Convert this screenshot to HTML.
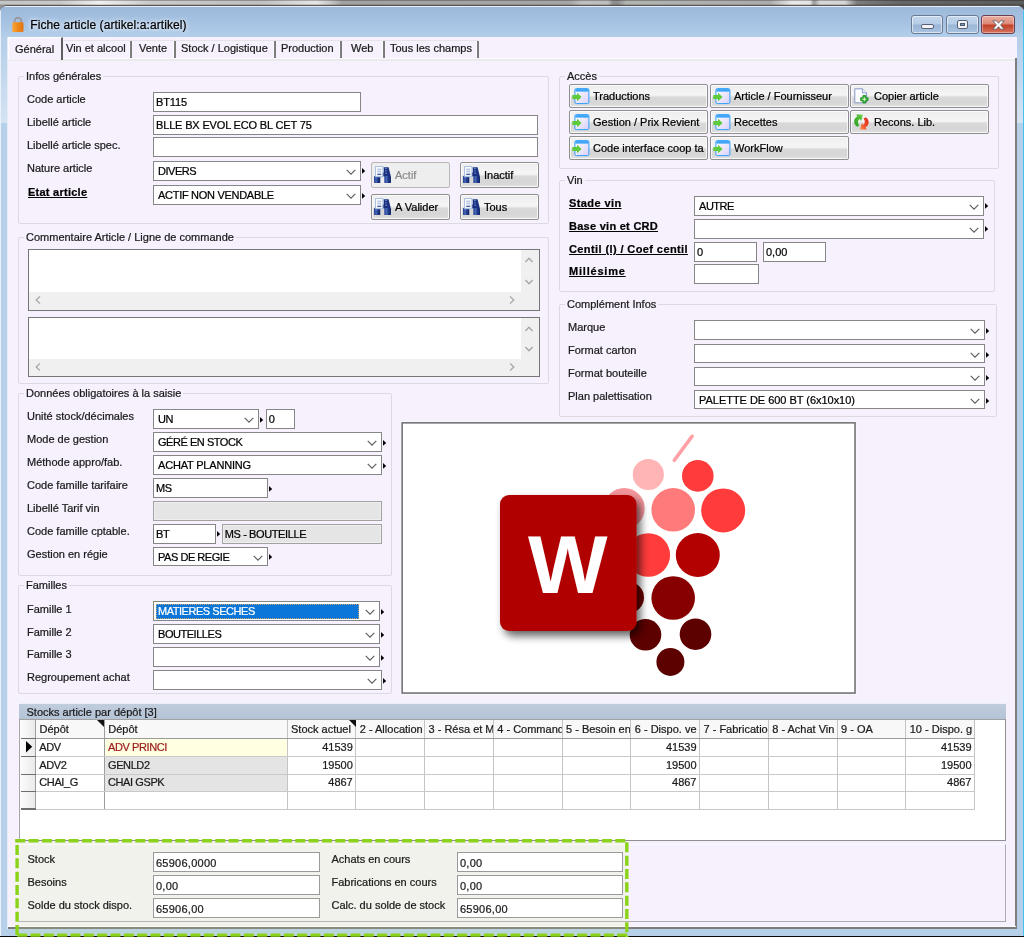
<!DOCTYPE html>
<html><head><meta charset="utf-8">
<style>
*{box-sizing:border-box;margin:0;padding:0}
html,body{width:1024px;height:937px;overflow:hidden;background:#b7d0ea}
body{font-family:"Liberation Sans",sans-serif;font-size:11px;color:#1a1a1a;position:relative;-webkit-text-stroke:.22px currentColor}
.a{position:absolute}
#desk{left:0;top:0;width:1024px;height:12px;background:linear-gradient(to bottom,rgba(0,0,0,.42) 0,rgba(0,0,0,0) 1.3px,rgba(0,0,0,0) 3.8px,rgba(0,0,0,.25) 5px),linear-gradient(to right,#c4c4c2 0,#c8c8c6 60px,#f0f0ee 100px,#cacac8 150px,#c0c0be 260px,#e6e6e4 316px,#c8c8c6 330px,#a2a2a2 342px,#a6a6a6 570px,#c0c0be 582px,#bdbdbb 608px,#8e8e8e 613px,#8e8e8e 618px,#b2b4b0 626px,#acacac 770px,#e8e8e6 792px,#e4e4e2 810px,#9a9a9a 814px,#d8d8d6 820px,#d4d4d2 845px,#7c7c7c 857px,#666 900px,#5c5c5c 1024px)}
#win{left:0;top:5px;width:1024px;height:932px;background:#b7d0ea;border-top:1px solid #565758;border-radius:7px 7px 0 0;overflow:hidden}
#title{left:0;top:0;width:1024px;height:32px;background:linear-gradient(#9db9da,#a4c1e2 45%,#b4cfea)}
#ttext{left:30.3px;top:12px;font-size:12px;letter-spacing:.09px;color:#000;white-space:nowrap;text-shadow:0 0 4px #fff,0 0 6px #e8f0fa}
#client{left:8px;top:37px;width:1009px;height:892px;background:#f6f1fc}
.gb{border:1px solid #dcd9e3;border-radius:2px}
.gbl{background:#f6f1fc;padding:0 2px;white-space:nowrap;line-height:13px;height:13px}
.lbl{white-space:nowrap;line-height:13px;height:13px}
.bl{font-weight:bold;text-decoration:underline;color:#000;letter-spacing:.4px}
.fld{letter-spacing:-.15px;background:#fff;border:1px solid #868686;height:20px;line-height:18px;padding-left:2px;white-space:nowrap;overflow:hidden;color:#000}
.cmb{padding-left:4px}
.ro{background:#e5e5e5;border-color:#a2a2a2;box-shadow:inset 0 0 0 1px #efefef}
.btn{border:1px solid #8e8f8f;border-radius:2px;background:linear-gradient(#eeeeee,#f5f5f5 46%,#d9d9d9 56%,#d6d6d6 80%,#e0e0e0);box-shadow:inset 0 0 0 1px rgba(255,255,255,.75);white-space:nowrap;line-height:20px;height:22px;color:#000}
.bf{letter-spacing:.25px;background:#fff;border:1px solid #9a9a9a;height:20px;line-height:20px;padding-left:2px;white-space:nowrap;color:#1a1a1a}
.cap{border:1px solid #6b7b94;border-radius:3px;box-shadow:inset 0 0 0 1px rgba(255,255,255,.55);background:linear-gradient(#c3d6ec,#b6cce6 48%,#9ab5d6 52%,#a9c3e0)}
#wrap{left:0;top:0;width:1024px;height:937px;filter:blur(.45px)}
</style></head><body>
<div id="wrap" class="a">
<div id="desk" class="a"></div>
<div id="win" class="a">
 <div id="title" class="a"></div>
 <div class="a" style="left:0;top:0;width:1024px;height:1px;background:rgba(255,255,255,.75)"></div>
 <div class="a" style="left:0;top:4px;width:1px;height:930px;background:rgba(255,255,255,.7)"></div>
 <div class="a" style="left:1022.7px;top:4px;width:1.3px;height:930px;background:#45c3ee"></div>
 <div id="ttext" class="a">Fiche article (artikel:a:artikel)</div>
 <svg class="a" style="left:12px;top:10px" width="12" height="17" viewBox="0 0 12 17"><defs><linearGradient id="lk" x1="0" x2="1"><stop offset="0" stop-color="#f9a63a"/><stop offset=".45" stop-color="#f08a1c"/><stop offset="1" stop-color="#e27412"/></linearGradient></defs><path d="M2.6 8V5.2a3.4 3.4 0 0 1 6.8 0V8" fill="none" stroke="#9a9aa0" stroke-width="1.9"/><rect x="0.3" y="6.3" width="11.2" height="9.8" rx="1.3" fill="url(#lk)"/></svg><div class="a cap" style="left:911px;top:9px;width:32px;height:19px"><div class="a" style="left:9px;top:8px;width:12.5px;height:5px;background:#f4f4f4;border:1px solid #55627a;border-radius:2px"></div></div><div class="a cap" style="left:946px;top:9px;width:33px;height:19px"><div class="a" style="left:9.7px;top:3.9px;width:11px;height:9px;background:#f4f4f4;border:1px solid #55627a;border-radius:2px"><div class="a" style="left:2px;top:2px;width:5px;height:3px;background:#7f9bc2;border:1px solid #4a5a72"></div></div></div><div class="a cap" style="left:981px;top:9px;width:34px;height:19px;border-color:#6b4050;background:linear-gradient(#e9b0a2,#dd8775 48%,#c23f24 52%,#d8735f);box-shadow:inset 0 0 0 1px rgba(255,255,255,.35)"><svg class="a" style="left:10px;top:4px" width="13" height="10" viewBox="0 0 13 10"><path d="M0.8 0.8h3.6L6.5 3.3 8.6 0.8h3.6L8.6 5l3.6 4.2H8.6L6.5 6.7 4.4 9.2H0.8L4.4 5z" fill="#fff" stroke="#5a5a66" stroke-width=".8" stroke-linejoin="round"/></svg></div>
</div>
<div class="a" style="left:7px;top:37px;width:1.5px;height:892px;background:rgba(255,255,255,.6)"></div>
<div class="a" style="left:1px;top:45px;width:6px;height:78px;background:linear-gradient(rgba(255,255,255,0),rgba(255,255,255,.42))"></div>
<div class="a" style="left:1017px;top:45px;width:5.7px;height:78px;background:linear-gradient(rgba(255,255,255,0),rgba(255,255,255,.42))"></div>
<div id="client" class="a"></div>
<div class="a" style="left:0;top:935.8px;width:1024px;height:2px;background:#0a0a0a"></div>
<div id="ui" class="a" style="left:0;top:0;width:1024px;height:937px">

<div class="a " style="left:8px;top:58px;width:1008px;height:1.1px;background:#fcfbfe"></div><div class="a " style="left:8px;top:59.1px;width:1008px;height:1.6px;background:#ebebeb"></div><div class="a " style="left:62.5px;top:40.2px;width:415px;height:1.2px;background:#e5e4e9"></div><div class="a " style="left:8px;top:37px;width:55px;height:23px;background:#f6f1fc;border-right:2px solid #5e5e5e;border-top:1px solid #fff;border-left:1px solid #fff"></div><div class="a lbl" style="left:15px;top:43px;">Général</div><div class="a lbl" style="left:66px;top:42px;">Vin et alcool</div><div class="a " style="left:129.4px;top:40.8px;width:2.8px;height:17.3px;background:#7c7c7c;border-left:1px solid #fbfbfd"></div><div class="a lbl" style="left:139px;top:42px;">Vente</div><div class="a " style="left:172.9px;top:40.8px;width:2.8px;height:17.3px;background:#7c7c7c;border-left:1px solid #fbfbfd"></div><div class="a lbl" style="left:181px;top:42px;">Stock / Logistique</div><div class="a " style="left:273.4px;top:40.8px;width:2.8px;height:17.3px;background:#7c7c7c;border-left:1px solid #fbfbfd"></div><div class="a lbl" style="left:281px;top:42px;">Production</div><div class="a " style="left:338.9px;top:40.8px;width:2.8px;height:17.3px;background:#7c7c7c;border-left:1px solid #fbfbfd"></div><div class="a lbl" style="left:351px;top:42px;">Web</div><div class="a " style="left:381.9px;top:40.8px;width:2.8px;height:17.3px;background:#7c7c7c;border-left:1px solid #fbfbfd"></div><div class="a lbl" style="left:390px;top:42px;">Tous les champs</div><div class="a " style="left:476.09999999999997px;top:40.8px;width:2.8px;height:17.3px;background:#7c7c7c;border-left:1px solid #fbfbfd"></div><div class="a " style="left:1015.1px;top:58.3px;width:1.6px;height:870.2px;background:#7e7e7e"></div><div class="a gb" style="left:18px;top:76px;width:531px;height:148px;"></div><div class="a gbl" style="left:24px;top:70px;">Infos générales</div><div class="a lbl" style="left:27px;top:93px;">Code article</div><div class="a lbl" style="left:27px;top:116px;">Libellé article</div><div class="a lbl" style="left:27px;top:139px;">Libellé article spec.</div><div class="a lbl" style="left:27px;top:162px;">Nature article</div><div class="a lbl bl" style="left:28px;top:186px;letter-spacing:.25px">Etat article</div><div class="a fld " style="left:153px;top:91.6px;width:207.5px;height:20px;line-height:19px;;letter-spacing:-0.1px">BT115</div><div class="a fld " style="left:153px;top:115px;width:385px;height:20px;line-height:19px;;letter-spacing:-0.16px">BLLE BX EVOL ECO BL CET 75</div><div class="a fld " style="left:153px;top:137.4px;width:385px;height:20px;line-height:19px;;letter-spacing:-0.46px"></div><div class="a fld cmb" style="left:153px;top:160.8px;width:207.5px;height:20px;line-height:19px;letter-spacing:-0.46px">DIVERS<svg class="a" style="right:4px;top:7px" width="10" height="7" viewBox="0 0 10 7"><path d="M0.7 0.9 L5 5.2 L9.3 0.9" fill="none" stroke="#5a5a5a" stroke-width="1.1"/></svg></div><svg class="a" style="left:361.5px;top:168.3px" width="4" height="6" viewBox="0 0 4 6"><path d="M0 0 L3.2 2.9 L0 5.8 Z" fill="#000"/></svg><div class="a fld cmb" style="left:153px;top:185.4px;width:207.5px;height:20px;line-height:19px;letter-spacing:-0.29px">ACTIF NON VENDABLE<svg class="a" style="right:4px;top:7px" width="10" height="7" viewBox="0 0 10 7"><path d="M0.7 0.9 L5 5.2 L9.3 0.9" fill="none" stroke="#5a5a5a" stroke-width="1.1"/></svg></div><svg class="a" style="left:361.5px;top:192.9px" width="4" height="6" viewBox="0 0 4 6"><path d="M0 0 L3.2 2.9 L0 5.8 Z" fill="#000"/></svg><div class="a btn" style="left:371px;top:162px;width:78.5px;height:26px;line-height:24px;color:#8a8a8a;background:#eeeeee;border-color:#b8b8b8;box-shadow:none;"><svg class="a" style="left:2px;top:3px" width="17" height="17" viewBox="0 0 17 17"><defs><linearGradient id="bn" x1="0" x2="1"><stop offset="0" stop-color="#243f92"/><stop offset=".35" stop-color="#4a69b6"/><stop offset=".6" stop-color="#1f3988"/><stop offset="1" stop-color="#14276a"/></linearGradient></defs><path d="M9.6 1.2h5l2.2 9H10z" fill="#1b3180"/><path d="M11.2 2.5h1.6M11.2 4.8h1.6M11.2 7.2h2" stroke="#6f8fd0" stroke-width="1"/><rect x="5.8" y="6.5" width="5" height="3.8" fill="#1a2f78"/><rect x="0" y="10" width="6.3" height="7" rx=".6" fill="url(#bn)"/><rect x="10.3" y="10" width="6.7" height="7" rx=".6" fill="url(#bn)"/><rect x="1.6" y=".6" width="7.3" height="10.2" fill="#fdfeff" stroke="#9fb8dc" stroke-width=".9"/><path d="M3.3 3.2h4M3.3 5.2h4M3.3 7.2h4" stroke="#92a6c8" stroke-width=".9"/><path d="M3.2 8.6h4.2" stroke="#3a58a8" stroke-width="1"/></svg><span class="a" style="left:23px;top:0">Actif</span></div><div class="a btn" style="left:460px;top:162px;width:78.5px;height:26px;line-height:24px;color:#000;"><svg class="a" style="left:2px;top:3px" width="17" height="17" viewBox="0 0 17 17"><defs><linearGradient id="bn" x1="0" x2="1"><stop offset="0" stop-color="#243f92"/><stop offset=".35" stop-color="#4a69b6"/><stop offset=".6" stop-color="#1f3988"/><stop offset="1" stop-color="#14276a"/></linearGradient></defs><path d="M9.6 1.2h5l2.2 9H10z" fill="#1b3180"/><path d="M11.2 2.5h1.6M11.2 4.8h1.6M11.2 7.2h2" stroke="#6f8fd0" stroke-width="1"/><rect x="5.8" y="6.5" width="5" height="3.8" fill="#1a2f78"/><rect x="0" y="10" width="6.3" height="7" rx=".6" fill="url(#bn)"/><rect x="10.3" y="10" width="6.7" height="7" rx=".6" fill="url(#bn)"/><rect x="1.6" y=".6" width="7.3" height="10.2" fill="#fdfeff" stroke="#9fb8dc" stroke-width=".9"/><path d="M3.3 3.2h4M3.3 5.2h4M3.3 7.2h4" stroke="#92a6c8" stroke-width=".9"/><path d="M3.2 8.6h4.2" stroke="#3a58a8" stroke-width="1"/></svg><span class="a" style="left:23px;top:0">Inactif</span></div><div class="a btn" style="left:371px;top:193.5px;width:78.5px;height:26px;line-height:24px;color:#000;"><svg class="a" style="left:2px;top:3px" width="17" height="17" viewBox="0 0 17 17"><defs><linearGradient id="bn" x1="0" x2="1"><stop offset="0" stop-color="#243f92"/><stop offset=".35" stop-color="#4a69b6"/><stop offset=".6" stop-color="#1f3988"/><stop offset="1" stop-color="#14276a"/></linearGradient></defs><path d="M9.6 1.2h5l2.2 9H10z" fill="#1b3180"/><path d="M11.2 2.5h1.6M11.2 4.8h1.6M11.2 7.2h2" stroke="#6f8fd0" stroke-width="1"/><rect x="5.8" y="6.5" width="5" height="3.8" fill="#1a2f78"/><rect x="0" y="10" width="6.3" height="7" rx=".6" fill="url(#bn)"/><rect x="10.3" y="10" width="6.7" height="7" rx=".6" fill="url(#bn)"/><rect x="1.6" y=".6" width="7.3" height="10.2" fill="#fdfeff" stroke="#9fb8dc" stroke-width=".9"/><path d="M3.3 3.2h4M3.3 5.2h4M3.3 7.2h4" stroke="#92a6c8" stroke-width=".9"/><path d="M3.2 8.6h4.2" stroke="#3a58a8" stroke-width="1"/></svg><span class="a" style="left:23px;top:0">A Valider</span></div><div class="a btn" style="left:460px;top:193.5px;width:78.5px;height:26px;line-height:24px;color:#000;"><svg class="a" style="left:2px;top:3px" width="17" height="17" viewBox="0 0 17 17"><defs><linearGradient id="bn" x1="0" x2="1"><stop offset="0" stop-color="#243f92"/><stop offset=".35" stop-color="#4a69b6"/><stop offset=".6" stop-color="#1f3988"/><stop offset="1" stop-color="#14276a"/></linearGradient></defs><path d="M9.6 1.2h5l2.2 9H10z" fill="#1b3180"/><path d="M11.2 2.5h1.6M11.2 4.8h1.6M11.2 7.2h2" stroke="#6f8fd0" stroke-width="1"/><rect x="5.8" y="6.5" width="5" height="3.8" fill="#1a2f78"/><rect x="0" y="10" width="6.3" height="7" rx=".6" fill="url(#bn)"/><rect x="10.3" y="10" width="6.7" height="7" rx=".6" fill="url(#bn)"/><rect x="1.6" y=".6" width="7.3" height="10.2" fill="#fdfeff" stroke="#9fb8dc" stroke-width=".9"/><path d="M3.3 3.2h4M3.3 5.2h4M3.3 7.2h4" stroke="#92a6c8" stroke-width=".9"/><path d="M3.2 8.6h4.2" stroke="#3a58a8" stroke-width="1"/></svg><span class="a" style="left:23px;top:0">Tous</span></div><div class="a gb" style="left:18px;top:236.5px;width:531px;height:147px;"></div><div class="a gbl" style="left:24px;top:230.5px;">Commentaire Article / Ligne de commande</div><div class="a " style="left:28px;top:249px;width:512px;height:61.5px;background:#fff;border:1px solid #767676"></div><div class="a " style="left:29px;top:292.0px;width:510px;height:17.5px;background:#f0f0f0"></div><div class="a " style="left:521px;top:250px;width:18px;height:59.5px;background:#f0f0f0"></div><svg class="a" style="left:31.5px;top:294.0px" width="12" height="12" viewBox="-6 -6 12 12"><path d="M2 -3.6L-1.8 0L2 3.6" fill="none" stroke="#a6a6a6" stroke-width="1.3"/></svg><svg class="a" style="left:505.7px;top:294.0px" width="12" height="12" viewBox="-6 -6 12 12"><path d="M-2 -3.6L1.8 0L-2 3.6" fill="none" stroke="#a6a6a6" stroke-width="1.3"/></svg><svg class="a" style="left:522.7px;top:254.39999999999998px" width="12" height="12" viewBox="-6 -6 12 12"><path d="M-3.6 2L0 -1.8L3.6 2" fill="none" stroke="#a6a6a6" stroke-width="1.3"/></svg><svg class="a" style="left:522.7px;top:276.3px" width="12" height="12" viewBox="-6 -6 12 12"><path d="M-3.6 -2L0 1.8L3.6 -2" fill="none" stroke="#a6a6a6" stroke-width="1.3"/></svg><div class="a " style="left:28px;top:317.3px;width:512px;height:60px;background:#fff;border:1px solid #767676"></div><div class="a " style="left:29px;top:358.8px;width:510px;height:17.5px;background:#f0f0f0"></div><div class="a " style="left:521px;top:318.3px;width:18px;height:58px;background:#f0f0f0"></div><svg class="a" style="left:31.5px;top:360.8px" width="12" height="12" viewBox="-6 -6 12 12"><path d="M2 -3.6L-1.8 0L2 3.6" fill="none" stroke="#a6a6a6" stroke-width="1.3"/></svg><svg class="a" style="left:505.7px;top:360.8px" width="12" height="12" viewBox="-6 -6 12 12"><path d="M-2 -3.6L1.8 0L-2 3.6" fill="none" stroke="#a6a6a6" stroke-width="1.3"/></svg><svg class="a" style="left:522.7px;top:322.7px" width="12" height="12" viewBox="-6 -6 12 12"><path d="M-3.6 2L0 -1.8L3.6 2" fill="none" stroke="#a6a6a6" stroke-width="1.3"/></svg><svg class="a" style="left:522.7px;top:343.1px" width="12" height="12" viewBox="-6 -6 12 12"><path d="M-3.6 -2L0 1.8L3.6 -2" fill="none" stroke="#a6a6a6" stroke-width="1.3"/></svg><div class="a gb" style="left:18px;top:393px;width:373.5px;height:183px;"></div><div class="a gbl" style="left:24px;top:387px;">Données obligatoires à la saisie</div><div class="a lbl" style="left:27px;top:410px;">Unité stock/décimales</div><div class="a lbl" style="left:27px;top:433px;">Mode de gestion</div><div class="a lbl" style="left:27px;top:456px;">Méthode appro/fab.</div><div class="a lbl" style="left:27px;top:479px;">Code famille tarifaire</div><div class="a lbl" style="left:27px;top:502px;">Libellé Tarif vin</div><div class="a lbl" style="left:27px;top:525px;">Code famille cptable.</div><div class="a lbl" style="left:27px;top:548px;">Gestion en régie</div><div class="a fld cmb" style="left:153px;top:409px;width:106px;height:20px;line-height:19px;letter-spacing:-0.46px">UN<svg class="a" style="right:4px;top:7px" width="10" height="7" viewBox="0 0 10 7"><path d="M0.7 0.9 L5 5.2 L9.3 0.9" fill="none" stroke="#5a5a5a" stroke-width="1.1"/></svg></div><svg class="a" style="left:260px;top:416.5px" width="4" height="6" viewBox="0 0 4 6"><path d="M0 0 L3.2 2.9 L0 5.8 Z" fill="#000"/></svg><div class="a fld " style="left:265.7px;top:409px;width:29px;height:20px;line-height:19px;;letter-spacing:0px">0</div><div class="a fld cmb" style="left:153px;top:432.2px;width:229px;height:20px;line-height:19px;letter-spacing:-0.46px">GÉRÉ EN STOCK<svg class="a" style="right:4px;top:7px" width="10" height="7" viewBox="0 0 10 7"><path d="M0.7 0.9 L5 5.2 L9.3 0.9" fill="none" stroke="#5a5a5a" stroke-width="1.1"/></svg></div><svg class="a" style="left:383px;top:439.7px" width="4" height="6" viewBox="0 0 4 6"><path d="M0 0 L3.2 2.9 L0 5.8 Z" fill="#000"/></svg><div class="a fld cmb" style="left:153px;top:455.2px;width:229px;height:20px;line-height:19px;letter-spacing:-0.19px">ACHAT PLANNING<svg class="a" style="right:4px;top:7px" width="10" height="7" viewBox="0 0 10 7"><path d="M0.7 0.9 L5 5.2 L9.3 0.9" fill="none" stroke="#5a5a5a" stroke-width="1.1"/></svg></div><svg class="a" style="left:383px;top:462.7px" width="4" height="6" viewBox="0 0 4 6"><path d="M0 0 L3.2 2.9 L0 5.8 Z" fill="#000"/></svg><div class="a fld " style="left:153px;top:478px;width:114.5px;height:20px;line-height:19px;;letter-spacing:-0.46px">MS</div><svg class="a" style="left:268.5px;top:485.5px" width="4" height="6" viewBox="0 0 4 6"><path d="M0 0 L3.2 2.9 L0 5.8 Z" fill="#000"/></svg><div class="a fld ro" style="left:153px;top:501px;width:229px;height:20px;line-height:19px;;letter-spacing:-0.46px"></div><div class="a fld " style="left:153px;top:523.7px;width:62.5px;height:20px;line-height:19px;;letter-spacing:-0.46px">BT</div><svg class="a" style="left:216.5px;top:531.2px" width="4" height="6" viewBox="0 0 4 6"><path d="M0 0 L3.2 2.9 L0 5.8 Z" fill="#000"/></svg><div class="a fld ro" style="left:221.8px;top:523.7px;width:160.2px;height:20px;line-height:19px;;letter-spacing:-0.39px">MS - BOUTEILLE</div><div class="a fld cmb" style="left:153px;top:546.6px;width:114.5px;height:19.8px;line-height:18.8px;letter-spacing:-0.46px">PAS DE REGIE<svg class="a" style="right:4px;top:7px" width="10" height="7" viewBox="0 0 10 7"><path d="M0.7 0.9 L5 5.2 L9.3 0.9" fill="none" stroke="#5a5a5a" stroke-width="1.1"/></svg></div><svg class="a" style="left:268.5px;top:554.1px" width="4" height="6" viewBox="0 0 4 6"><path d="M0 0 L3.2 2.9 L0 5.8 Z" fill="#000"/></svg><div class="a gb" style="left:18px;top:584.6px;width:373.5px;height:109px;"></div><div class="a gbl" style="left:24px;top:578.6px;">Familles</div><div class="a lbl" style="left:27px;top:603px;">Famille 1</div><div class="a lbl" style="left:27px;top:625.5px;">Famille 2</div><div class="a lbl" style="left:27px;top:647.8px;">Famille 3</div><div class="a lbl" style="left:27px;top:670.6px;">Regroupement achat</div><div class="a fld cmb" style="left:153px;top:601.4px;width:227px;height:20px;line-height:19px;letter-spacing:-0.46px"><span class="a" style="left:2px;top:1.5px;right:20px;bottom:1.5px;background:#0a76d8;color:#fff;line-height:15px;padding-left:2px;outline:1px dotted #c9a070;outline-offset:-1px">MATIERES SECHES</span><svg class="a" style="right:4px;top:7px" width="10" height="7" viewBox="0 0 10 7"><path d="M0.7 0.9 L5 5.2 L9.3 0.9" fill="none" stroke="#5a5a5a" stroke-width="1.1"/></svg></div><svg class="a" style="left:381px;top:608.9px" width="4" height="6" viewBox="0 0 4 6"><path d="M0 0 L3.2 2.9 L0 5.8 Z" fill="#000"/></svg><div class="a fld cmb" style="left:153px;top:624.3px;width:227px;height:20px;line-height:19px;letter-spacing:-0.46px">BOUTEILLES<svg class="a" style="right:4px;top:7px" width="10" height="7" viewBox="0 0 10 7"><path d="M0.7 0.9 L5 5.2 L9.3 0.9" fill="none" stroke="#5a5a5a" stroke-width="1.1"/></svg></div><svg class="a" style="left:381px;top:631.8px" width="4" height="6" viewBox="0 0 4 6"><path d="M0 0 L3.2 2.9 L0 5.8 Z" fill="#000"/></svg><div class="a fld cmb" style="left:153px;top:647.2px;width:227px;height:20px;line-height:19px;letter-spacing:-0.46px"><svg class="a" style="right:4px;top:7px" width="10" height="7" viewBox="0 0 10 7"><path d="M0.7 0.9 L5 5.2 L9.3 0.9" fill="none" stroke="#5a5a5a" stroke-width="1.1"/></svg></div><svg class="a" style="left:381px;top:654.7px" width="4" height="6" viewBox="0 0 4 6"><path d="M0 0 L3.2 2.9 L0 5.8 Z" fill="#000"/></svg><div class="a fld cmb" style="left:153px;top:670.1px;width:229px;height:20px;line-height:19px;letter-spacing:-0.46px"><svg class="a" style="right:4px;top:7px" width="10" height="7" viewBox="0 0 10 7"><path d="M0.7 0.9 L5 5.2 L9.3 0.9" fill="none" stroke="#5a5a5a" stroke-width="1.1"/></svg></div><svg class="a" style="left:383px;top:677.6px" width="4" height="6" viewBox="0 0 4 6"><path d="M0 0 L3.2 2.9 L0 5.8 Z" fill="#000"/></svg>
<div class="a gb" style="left:559px;top:76px;width:440px;height:93px;"></div><div class="a gbl" style="left:565px;top:70px;">Accès</div><div class="a btn" style="left:569px;top:84px;width:139px;height:24px;line-height:22px;color:#000;"><svg class="a" style="left:2px;top:3px" width="18" height="17" viewBox="0 0 18 17"><defs><linearGradient id="wg" x1="0" y1="0" x2="1" y2="1"><stop offset="0" stop-color="#ffffff"/><stop offset="1" stop-color="#d9d0f8"/></linearGradient></defs><rect x="2.9" y="0.6" width="14" height="15" rx="1.5" fill="url(#wg)" stroke="#2f9ffa"/><rect x="3.4" y="1.1" width="13" height="2.5" fill="#38a3f8"/><path d="M0.3 7.1h4.7V4.8L9.6 9 5 13.2V10.9H0.3z" fill="#5fca3c"/></svg><span class="a" style="left:23px;top:0">Traductions</span></div><div class="a btn" style="left:710px;top:84px;width:139px;height:24px;line-height:22px;color:#000;"><svg class="a" style="left:2px;top:3px" width="18" height="17" viewBox="0 0 18 17"><defs><linearGradient id="wg" x1="0" y1="0" x2="1" y2="1"><stop offset="0" stop-color="#ffffff"/><stop offset="1" stop-color="#d9d0f8"/></linearGradient></defs><rect x="2.9" y="0.6" width="14" height="15" rx="1.5" fill="url(#wg)" stroke="#2f9ffa"/><rect x="3.4" y="1.1" width="13" height="2.5" fill="#38a3f8"/><path d="M0.3 7.1h4.7V4.8L9.6 9 5 13.2V10.9H0.3z" fill="#5fca3c"/></svg><span class="a" style="left:23px;top:0">Article / Fournisseur</span></div><div class="a btn" style="left:850px;top:84px;width:139px;height:24px;line-height:22px;color:#000;"><svg class="a" style="left:3px;top:3px" width="17" height="17" viewBox="0 0 17 17"><path d="M0.8 0.8h7.6l4.2 4.2v9.8h-11.8z" fill="#fdfdff" stroke="#8698c6" stroke-width="1"/><path d="M8.4 0.8v4.2h4.2" fill="#e8ecf8" stroke="#8698c6" stroke-width=".9"/><path d="M8.9 7.6h2.9v2.2h2.2v2.9h-2.2v2.2h-2.9v-2.2h-2.2v-2.9h2.2z" fill="#35b135" stroke="#1e8c1e" stroke-width=".9" stroke-linejoin="round"/><path d="M10.35 9.3v3.9M8.4 11.25h3.9" stroke="#d8f5d0" stroke-width="1"/></svg><span class="a" style="left:23px;top:0">Copier article</span></div><div class="a btn" style="left:569px;top:110px;width:139px;height:24px;line-height:22px;color:#000;"><svg class="a" style="left:2px;top:3px" width="18" height="17" viewBox="0 0 18 17"><defs><linearGradient id="wg" x1="0" y1="0" x2="1" y2="1"><stop offset="0" stop-color="#ffffff"/><stop offset="1" stop-color="#d9d0f8"/></linearGradient></defs><rect x="2.9" y="0.6" width="14" height="15" rx="1.5" fill="url(#wg)" stroke="#2f9ffa"/><rect x="3.4" y="1.1" width="13" height="2.5" fill="#38a3f8"/><path d="M0.3 7.1h4.7V4.8L9.6 9 5 13.2V10.9H0.3z" fill="#5fca3c"/></svg><span class="a" style="left:23px;top:0">Gestion / Prix Revient</span></div><div class="a btn" style="left:710px;top:110px;width:139px;height:24px;line-height:22px;color:#000;"><svg class="a" style="left:2px;top:3px" width="18" height="17" viewBox="0 0 18 17"><defs><linearGradient id="wg" x1="0" y1="0" x2="1" y2="1"><stop offset="0" stop-color="#ffffff"/><stop offset="1" stop-color="#d9d0f8"/></linearGradient></defs><rect x="2.9" y="0.6" width="14" height="15" rx="1.5" fill="url(#wg)" stroke="#2f9ffa"/><rect x="3.4" y="1.1" width="13" height="2.5" fill="#38a3f8"/><path d="M0.3 7.1h4.7V4.8L9.6 9 5 13.2V10.9H0.3z" fill="#5fca3c"/></svg><span class="a" style="left:23px;top:0">Recettes</span></div><div class="a btn" style="left:850px;top:110px;width:139px;height:24px;line-height:22px;color:#000;"><svg class="a" style="left:2px;top:3px" width="18" height="17" viewBox="-1.5 0 18 17"><defs><linearGradient id="rg" x1="1" y1="0" x2="0" y2="1"><stop offset="0" stop-color="#e0281a"/><stop offset=".6" stop-color="#f0502a"/><stop offset="1" stop-color="#ff9a4a"/></linearGradient><linearGradient id="gg" x1="0" y1="1" x2="1" y2="0"><stop offset="0" stop-color="#2f9a22"/><stop offset=".7" stop-color="#4cc034"/><stop offset="1" stop-color="#9be07a"/></linearGradient></defs><path d="M2.6 12.8C-1.6 9.6-1.2 4.2 3 2.6L1.6 0.6L8.6 0.5L6.6 7L5.2 5C3 6.4 3 9.4 5 11.6Z" fill="url(#gg)"/><path d="M11.4 3.2C15.4 6.2 15 11.4 11 13.2L12.2 15.4L5.4 15.5L7.4 9L8.8 10.9C10.8 9.6 10.8 6.6 9 4.6Z" fill="url(#rg)"/></svg><span class="a" style="left:23px;top:0">Recons. Lib.</span></div><div class="a btn" style="left:569px;top:136px;width:139px;height:24px;line-height:22px;color:#000;"><svg class="a" style="left:2px;top:3px" width="18" height="17" viewBox="0 0 18 17"><defs><linearGradient id="wg" x1="0" y1="0" x2="1" y2="1"><stop offset="0" stop-color="#ffffff"/><stop offset="1" stop-color="#d9d0f8"/></linearGradient></defs><rect x="2.9" y="0.6" width="14" height="15" rx="1.5" fill="url(#wg)" stroke="#2f9ffa"/><rect x="3.4" y="1.1" width="13" height="2.5" fill="#38a3f8"/><path d="M0.3 7.1h4.7V4.8L9.6 9 5 13.2V10.9H0.3z" fill="#5fca3c"/></svg><span class="a" style="left:23px;top:0">Code interface coop ta</span></div><div class="a btn" style="left:710px;top:136px;width:139px;height:24px;line-height:22px;color:#000;"><svg class="a" style="left:2px;top:3px" width="18" height="17" viewBox="0 0 18 17"><defs><linearGradient id="wg" x1="0" y1="0" x2="1" y2="1"><stop offset="0" stop-color="#ffffff"/><stop offset="1" stop-color="#d9d0f8"/></linearGradient></defs><rect x="2.9" y="0.6" width="14" height="15" rx="1.5" fill="url(#wg)" stroke="#2f9ffa"/><rect x="3.4" y="1.1" width="13" height="2.5" fill="#38a3f8"/><path d="M0.3 7.1h4.7V4.8L9.6 9 5 13.2V10.9H0.3z" fill="#5fca3c"/></svg><span class="a" style="left:23px;top:0">WorkFlow</span></div><div class="a gb" style="left:559px;top:180px;width:436px;height:112px;"></div><div class="a gbl" style="left:565px;top:174px;">Vin</div><div class="a lbl bl" style="left:569px;top:197px;">Stade vin</div><div class="a lbl bl" style="left:569px;top:220px;letter-spacing:.27px">Base vin et CRD</div><div class="a lbl bl" style="left:569px;top:243px;">Centil (l) / Coef centil</div><div class="a lbl bl" style="left:569px;top:265px;letter-spacing:.8px">Millésime</div><div class="a fld cmb" style="left:694px;top:195.8px;width:289.5px;height:20px;line-height:19px;letter-spacing:-0.46px">AUTRE<svg class="a" style="right:4px;top:7px" width="10" height="7" viewBox="0 0 10 7"><path d="M0.7 0.9 L5 5.2 L9.3 0.9" fill="none" stroke="#5a5a5a" stroke-width="1.1"/></svg></div><svg class="a" style="left:984.5px;top:203.3px" width="4" height="6" viewBox="0 0 4 6"><path d="M0 0 L3.2 2.9 L0 5.8 Z" fill="#000"/></svg><div class="a fld cmb" style="left:694px;top:218.8px;width:289.5px;height:20px;line-height:19px;letter-spacing:-0.46px"><svg class="a" style="right:4px;top:7px" width="10" height="7" viewBox="0 0 10 7"><path d="M0.7 0.9 L5 5.2 L9.3 0.9" fill="none" stroke="#5a5a5a" stroke-width="1.1"/></svg></div><svg class="a" style="left:984.5px;top:226.3px" width="4" height="6" viewBox="0 0 4 6"><path d="M0 0 L3.2 2.9 L0 5.8 Z" fill="#000"/></svg><div class="a fld " style="left:694px;top:241.6px;width:63px;height:20px;line-height:19px;;letter-spacing:0px">0</div><div class="a fld " style="left:763px;top:241.6px;width:62.5px;height:20px;line-height:19px;;letter-spacing:0px">0,00</div><div class="a fld " style="left:694px;top:264.4px;width:65px;height:20px;line-height:19px;;letter-spacing:-0.46px"></div><div class="a gb" style="left:559px;top:304.3px;width:437.5px;height:112.3px;"></div><div class="a gbl" style="left:565px;top:298.3px;">Complément Infos</div><div class="a lbl" style="left:568px;top:321px;">Marque</div><div class="a lbl" style="left:568px;top:344px;">Format carton</div><div class="a lbl" style="left:568px;top:367px;">Format bouteille</div><div class="a lbl" style="left:568px;top:390px;">Plan palettisation</div><div class="a fld cmb" style="left:694px;top:320px;width:291.3px;height:20px;line-height:19px;letter-spacing:-0.46px"><svg class="a" style="right:4px;top:7px" width="10" height="7" viewBox="0 0 10 7"><path d="M0.7 0.9 L5 5.2 L9.3 0.9" fill="none" stroke="#5a5a5a" stroke-width="1.1"/></svg></div><svg class="a" style="left:986.3px;top:327.5px" width="4" height="6" viewBox="0 0 4 6"><path d="M0 0 L3.2 2.9 L0 5.8 Z" fill="#000"/></svg><div class="a fld cmb" style="left:694px;top:344px;width:291.3px;height:19.4px;line-height:18.4px;letter-spacing:-0.46px"><svg class="a" style="right:4px;top:7px" width="10" height="7" viewBox="0 0 10 7"><path d="M0.7 0.9 L5 5.2 L9.3 0.9" fill="none" stroke="#5a5a5a" stroke-width="1.1"/></svg></div><svg class="a" style="left:986.3px;top:351.5px" width="4" height="6" viewBox="0 0 4 6"><path d="M0 0 L3.2 2.9 L0 5.8 Z" fill="#000"/></svg><div class="a fld cmb" style="left:694px;top:367px;width:291.3px;height:19.4px;line-height:18.4px;letter-spacing:-0.46px"><svg class="a" style="right:4px;top:7px" width="10" height="7" viewBox="0 0 10 7"><path d="M0.7 0.9 L5 5.2 L9.3 0.9" fill="none" stroke="#5a5a5a" stroke-width="1.1"/></svg></div><svg class="a" style="left:986.3px;top:374.5px" width="4" height="6" viewBox="0 0 4 6"><path d="M0 0 L3.2 2.9 L0 5.8 Z" fill="#000"/></svg><div class="a fld cmb" style="left:694px;top:390px;width:291.3px;height:19.4px;line-height:18.4px;letter-spacing:-0.03px">PALETTE DE 600 BT (6x10x10)<svg class="a" style="right:4px;top:7px" width="10" height="7" viewBox="0 0 10 7"><path d="M0.7 0.9 L5 5.2 L9.3 0.9" fill="none" stroke="#5a5a5a" stroke-width="1.1"/></svg></div><svg class="a" style="left:986.3px;top:397.5px" width="4" height="6" viewBox="0 0 4 6"><path d="M0 0 L3.2 2.9 L0 5.8 Z" fill="#000"/></svg>
<svg class="a" style="left:398px;top:419px" width="462" height="279" viewBox="398 419 462 279"><rect x="401.1" y="421.8" width="455" height="272.3" fill="none" stroke="#fff" stroke-opacity=".55" stroke-width="1"/><rect x="402.15" y="422.85" width="452.9" height="270.2" fill="#fff" stroke="#6c6c70" stroke-width="1.5"/></svg><svg class="a" style="left:403px;top:423px" width="452" height="269" viewBox="403 423 452 269">
<defs>
<filter id="sh" x="-20%" y="-20%" width="150%" height="150%"><feGaussianBlur in="SourceAlpha" stdDeviation="4"/><feOffset dx="4" dy="5"/><feComponentTransfer><feFuncA type="linear" slope=".62"/></feComponentTransfer><feMerge><feMergeNode/><feMergeNode in="SourceGraphic"/></feMerge></filter>
</defs>
<line x1="674.3" y1="460.3" x2="692.1" y2="436.3" stroke="#ff9fa6" stroke-width="3.6" stroke-linecap="round"/>
<circle cx="648.3" cy="474.5" r="15.6" fill="#ffb5b5"/>
<circle cx="697.8" cy="475.9" r="15.8" fill="#ff3b3b"/>
<circle cx="624.2" cy="508.4" r="20.5" fill="#f3969b"/>
<circle cx="673.2" cy="509.8" r="21.8" fill="#ff7b7b"/>
<circle cx="723.2" cy="510.4" r="22" fill="#ff3b3b"/>
<circle cx="648.3" cy="555" r="21.8" fill="#ff3b3b"/>
<circle cx="697.8" cy="555" r="22" fill="#b30000"/>
<circle cx="628.5" cy="597.5" r="15.5" fill="#6e0000"/>
<circle cx="673.2" cy="598" r="21.8" fill="#870000"/>
<circle cx="645.5" cy="634.8" r="15.8" fill="#5c0000"/>
<circle cx="695.5" cy="634.2" r="15.8" fill="#5c0000"/>
<circle cx="670.4" cy="661.9" r="14" fill="#5c0000"/>
<rect x="500" y="495" width="136.5" height="136" rx="9" fill="#b10000" filter="url(#sh)"/>
<text x="567.8" y="593.3" text-anchor="middle" font-family="Liberation Sans" font-weight="bold" font-size="82" textLength="79.5" lengthAdjust="spacingAndGlyphs" fill="#fff">W</text>
</svg>
<div class="a " style="left:18.9px;top:719.3px;width:987.2px;height:122.2px;background:#fff;border:1px solid #8f8f8f;border-left-color:#a6a6a6;border-top-color:#a2a2a2"></div><div class="a " style="left:18.9px;top:703.3px;width:987.2px;height:16.2px;background:linear-gradient(#c0cddd,#b4c3d6)"></div><div class="a " style="left:18px;top:702.5px;width:988px;height:1px;background:rgba(255,255,255,.7)"></div><div class="a lbl" style="left:26.5px;top:706px;">Stocks article par dépôt [3]</div><div class="a " style="left:20.5px;top:720px;width:954px;height:18.5px;background:#f8f8f8"></div><div class="a" style="left:36.5px;top:721.2px;width:67.25px;height:17px;overflow:hidden;white-space:nowrap;line-height:17px;padding-left:3px">Dépôt</div><div class="a" style="left:105.25px;top:721.2px;width:181.25px;height:17px;overflow:hidden;white-space:nowrap;line-height:17px;padding-left:3px">Dépôt</div><div class="a" style="left:288px;top:721.2px;width:67.25px;height:17px;overflow:hidden;white-space:nowrap;line-height:17px;padding-left:3px">Stock actuel</div><div class="a" style="left:356.75px;top:721.2px;width:67.25px;height:17px;overflow:hidden;white-space:nowrap;line-height:17px;padding-left:3px">2 - Allocation</div><div class="a" style="left:425.5px;top:721.2px;width:67.25px;height:17px;overflow:hidden;white-space:nowrap;line-height:17px;padding-left:3px">3 - Résa et Mise</div><div class="a" style="left:494.25px;top:721.2px;width:67.25px;height:17px;overflow:hidden;white-space:nowrap;line-height:17px;padding-left:3px">4 - Commande</div><div class="a" style="left:563px;top:721.2px;width:67.25px;height:17px;overflow:hidden;white-space:nowrap;line-height:17px;padding-left:3px">5 - Besoin en</div><div class="a" style="left:631.75px;top:721.2px;width:67.25px;height:17px;overflow:hidden;white-space:nowrap;line-height:17px;padding-left:3px">6 - Dispo. ve</div><div class="a" style="left:700.5px;top:721.2px;width:67.25px;height:17px;overflow:hidden;white-space:nowrap;line-height:17px;padding-left:3px">7 - Fabrication</div><div class="a" style="left:769.25px;top:721.2px;width:67.25px;height:17px;overflow:hidden;white-space:nowrap;line-height:17px;padding-left:3px">8 - Achat Vin</div><div class="a" style="left:838px;top:721.2px;width:67.25px;height:17px;overflow:hidden;white-space:nowrap;line-height:17px;padding-left:3px">9 - OA</div><div class="a" style="left:906.75px;top:721.2px;width:67.25px;height:17px;overflow:hidden;white-space:nowrap;line-height:17px;padding-left:3px">10 - Dispo. g</div><div class="a " style="left:20px;top:720px;width:15.5px;height:89px;background:linear-gradient(to right,#fcfcfc,#e9e9e9)"></div><div class="a " style="left:104.75px;top:739px;width:182px;height:17.5px;background:#ffffe1"></div><div class="a " style="left:104.75px;top:757px;width:182px;height:17px;background:#e4e4e4"></div><div class="a " style="left:104.75px;top:774.5px;width:182px;height:17px;background:#e4e4e4"></div><div class="a " style="left:35.0px;top:720px;width:1px;height:89px;background:#9c9c9c"></div><div class="a " style="left:103.75px;top:720px;width:1px;height:89px;background:#9c9c9c"></div><div class="a " style="left:286.5px;top:720px;width:1px;height:89px;background:#c4c4c4"></div><div class="a " style="left:355.25px;top:720px;width:1px;height:89px;background:#c4c4c4"></div><div class="a " style="left:424.0px;top:720px;width:1px;height:89px;background:#c4c4c4"></div><div class="a " style="left:492.75px;top:720px;width:1px;height:89px;background:#c4c4c4"></div><div class="a " style="left:561.5px;top:720px;width:1px;height:89px;background:#c4c4c4"></div><div class="a " style="left:630.25px;top:720px;width:1px;height:89px;background:#c4c4c4"></div><div class="a " style="left:699.0px;top:720px;width:1px;height:89px;background:#c4c4c4"></div><div class="a " style="left:767.75px;top:720px;width:1px;height:89px;background:#c4c4c4"></div><div class="a " style="left:836.5px;top:720px;width:1px;height:89px;background:#c4c4c4"></div><div class="a " style="left:905.25px;top:720px;width:1px;height:89px;background:#c4c4c4"></div><div class="a " style="left:974.0px;top:720px;width:1px;height:89px;background:#c4c4c4"></div><div class="a " style="left:20.5px;top:738px;width:954.5px;height:1px;background:#9a9a9a"></div><div class="a " style="left:35.5px;top:756.0px;width:939.5px;height:1px;background:#c9c9c9"></div><div class="a " style="left:35.5px;top:773.5px;width:939.5px;height:1px;background:#c9c9c9"></div><div class="a " style="left:35.5px;top:791.0px;width:939.5px;height:1px;background:#c9c9c9"></div><div class="a " style="left:35.5px;top:808.5px;width:939.5px;height:1px;background:#c9c9c9"></div><div class="a " style="left:20.5px;top:738.0px;width:15px;height:1px;background:#6e6e6e"></div><div class="a " style="left:20.5px;top:756.0px;width:15px;height:1px;background:#6e6e6e"></div><div class="a " style="left:20.5px;top:773.5px;width:15px;height:1px;background:#6e6e6e"></div><div class="a " style="left:20.5px;top:791.0px;width:15px;height:1px;background:#6e6e6e"></div><div class="a " style="left:20.5px;top:808.5px;width:15px;height:1px;background:#6e6e6e"></div><div class="a " style="left:20.5px;top:808px;width:15.5px;height:1.5px;background:#6e6e6e"></div><svg class="a" style="left:97px;top:720px" width="7" height="7" viewBox="0 0 7 7"><path d="M0 0H7V7Z" fill="#111"/></svg><svg class="a" style="left:348.5px;top:720px" width="7" height="7" viewBox="0 0 7 7"><path d="M0 0H7V7Z" fill="#111"/></svg><svg class="a" style="left:25.8px;top:741.3px" width="7" height="12" viewBox="0 0 7 12"><path d="M0 0L6.2 5.7L0 11.4Z" fill="#000"/></svg><div class="a lbl" style="left:39.3px;top:740.7px;letter-spacing:-.4px">ADV</div><div class="a lbl" style="left:108px;top:740.7px;color:#9b1c1c;letter-spacing:-.4px">ADV PRINCI</div><div class="a lbl" style="left:292.75px;top:740.7px;width:60px;text-align:right">41539</div><div class="a lbl" style="left:636.5px;top:740.7px;width:60px;text-align:right">41539</div><div class="a lbl" style="left:911.5px;top:740.7px;width:60px;text-align:right">41539</div><div class="a lbl" style="left:39.3px;top:758.7px;letter-spacing:-.4px">ADV2</div><div class="a lbl" style="left:108px;top:758.7px;color:#1a1a1a;letter-spacing:-.4px">GENLD2</div><div class="a lbl" style="left:292.75px;top:758.7px;width:60px;text-align:right">19500</div><div class="a lbl" style="left:636.5px;top:758.7px;width:60px;text-align:right">19500</div><div class="a lbl" style="left:911.5px;top:758.7px;width:60px;text-align:right">19500</div><div class="a lbl" style="left:39.3px;top:776.2px;letter-spacing:-.4px">CHAI_G</div><div class="a lbl" style="left:108px;top:776.2px;color:#1a1a1a;letter-spacing:-.4px">CHAI GSPK</div><div class="a lbl" style="left:292.75px;top:776.2px;width:60px;text-align:right">4867</div><div class="a lbl" style="left:636.5px;top:776.2px;width:60px;text-align:right">4867</div><div class="a lbl" style="left:911.5px;top:776.2px;width:60px;text-align:right">4867</div>
<div class="a " style="left:18px;top:843.5px;width:987.8px;height:78.2px;background:#f6f1fc;border:1px solid #aeadb6;border-top-color:#fbfaff;border-left-color:#fbfaff"></div><div class="a " style="left:8px;top:926px;width:1008px;height:1px;background:#fbfaff"></div><div class="a " style="left:8px;top:927px;width:1008.7px;height:1.6px;background:#7c7c7c"></div><div class="a " style="left:17px;top:841px;width:610px;height:95px;background:rgba(212,255,135,.12)"></div><div class="a lbl" style="left:27.5px;top:853px;">Stock</div><div class="a lbl" style="left:27.5px;top:876px;">Besoins</div><div class="a lbl" style="left:27.5px;top:899px;">Solde du stock dispo.</div><div class="a lbl" style="left:331.5px;top:853px;">Achats en cours</div><div class="a lbl" style="left:331.5px;top:876px;">Fabrications en cours</div><div class="a lbl" style="left:331.5px;top:899px;">Calc. du solde de stock</div><div class="a bf" style="left:153px;top:852px;width:166.5px">65906,0000</div><div class="a bf" style="left:457px;top:852px;width:166px">0,00</div><div class="a bf" style="left:153px;top:875px;width:166.5px">0,00</div><div class="a bf" style="left:457px;top:875px;width:166px">0,00</div><div class="a bf" style="left:153px;top:897.5px;width:166.5px">65906,00</div><div class="a bf" style="left:457px;top:897.5px;width:166px">65906,00</div><svg class="a" style="left:0;top:830px" width="700" height="107" viewBox="0 830 700 107" fill="none" stroke="#8bd31b" stroke-width="3.45" stroke-dasharray="10 3.333"><line x1="15.3" y1="840.75" x2="628.5" y2="840.75"/><line x1="15.3" y1="935.1" x2="628.5" y2="935.1" stroke-dashoffset="11.48"/><line x1="17.1" y1="839" x2="17.1" y2="937" stroke-dashoffset="7.333"/><line x1="626.8" y1="839" x2="626.8" y2="937" stroke-dashoffset="9.967"/></svg>
</div>
</div>
</body></html>
